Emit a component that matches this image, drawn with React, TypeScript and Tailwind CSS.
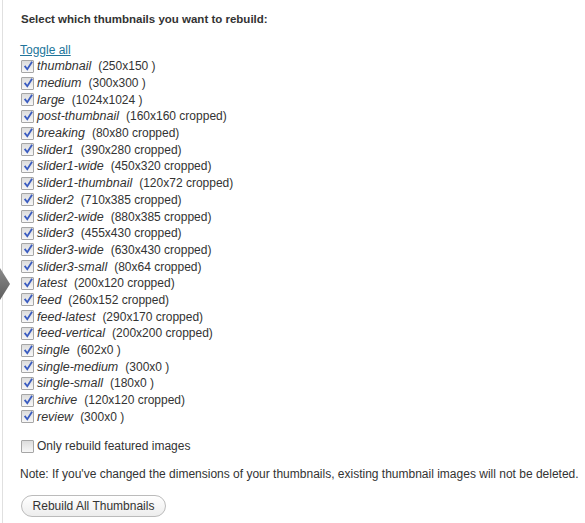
import React from "react";

const items: [string, string][] = [
  ["thumbnail", "(250x150 )"],
  ["medium", "(300x300 )"],
  ["large", "(1024x1024 )"],
  ["post-thumbnail", "(160x160 cropped)"],
  ["breaking", "(80x80 cropped)"],
  ["slider1", "(390x280 cropped)"],
  ["slider1-wide", "(450x320 cropped)"],
  ["slider1-thumbnail", "(120x72 cropped)"],
  ["slider2", "(710x385 cropped)"],
  ["slider2-wide", "(880x385 cropped)"],
  ["slider3", "(455x430 cropped)"],
  ["slider3-wide", "(630x430 cropped)"],
  ["slider3-small", "(80x64 cropped)"],
  ["latest", "(200x120 cropped)"],
  ["feed", "(260x152 cropped)"],
  ["feed-latest", "(290x170 cropped)"],
  ["feed-vertical", "(200x200 cropped)"],
  ["single", "(602x0 )"],
  ["single-medium", "(300x0 )"],
  ["single-small", "(180x0 )"],
  ["archive", "(120x120 cropped)"],
  ["review", "(300x0 )"],
];

function Box({ checked }: { checked: boolean }) {
  return (
    <div className="relative w-[13px] h-[13px] shrink-0 border border-[#a6a6a6] rounded-[1px] bg-gradient-to-b from-[#dcdcdc] to-[#f7f7f7]">
      {checked && (
        <svg className="absolute left-[1px] top-[0px]" width="11" height="11" viewBox="0 0 11 11">
          <path d="M2.2 5.6 L4.3 8.3 L8.6 1.6" fill="none" stroke="#3a5cc0" strokeWidth="1.8" strokeLinecap="square" strokeLinejoin="miter" />
        </svg>
      )}
    </div>
  );
}

export default function App() {
  return (
    <div
      className="relative w-[585px] h-[523px] bg-white overflow-hidden text-[#333]"
      style={{ fontFamily: '"Liberation Sans", Arial, sans-serif' }}
    >
      <div className="h-full ml-[2px] border-l border-[#e0e0e0] pl-[17px] pt-[11px]">
        <div className="h-4 leading-4 text-[11.5px] font-bold pl-[1px]">
          Select which thumbnails you want to rebuild:
        </div>
        <div className="mt-[15px] h-4 leading-4 text-[12px]">
          <a href="#" className="text-[#21759b] underline">Toggle all</a>
        </div>
        <div className="flex flex-col">
          {items.map(([name, size]) => (
            <div key={name} className="h-[16.7px] flex items-center pl-[1px] leading-4">
              <Box checked />
              <span className="ml-[3px] italic text-[12.5px]">{name}</span>
              <span className="ml-[7px] text-[12px]">{size}</span>
            </div>
          ))}
        </div>
        <div className="mt-[13px] h-4 flex items-center pl-[1px] text-[12px] leading-4">
          <Box checked={false} />
          <span className="ml-[3px]">Only rebuild featured images</span>
        </div>
        <div className="mt-[12px] h-4 leading-4 text-[12px]">
          Note: If you've changed the dimensions of your thumbnails, existing thumbnail images will not be deleted.
        </div>
        <div className="mt-[11px] pl-[1px]">
          <button className="h-[22px] w-[145px] rounded-full border border-[#bbb] bg-gradient-to-b from-white to-[#ededed] text-[12px] text-[#333] leading-4">
            Rebuild All Thumbnails
          </button>
        </div>
      </div>
      <svg className="absolute left-0 top-[268px]" width="11" height="32" viewBox="0 0 11 32">
        <defs>
          <linearGradient id="ag" x1="0" y1="0" x2="0" y2="1">
            <stop offset="0" stopColor="#8a8a8a" />
            <stop offset="1" stopColor="#5e5e5e" />
          </linearGradient>
        </defs>
        <path d="M0 0 L10 16 L0 32 Z" fill="url(#ag)" />
      </svg>
    </div>
  );
}
